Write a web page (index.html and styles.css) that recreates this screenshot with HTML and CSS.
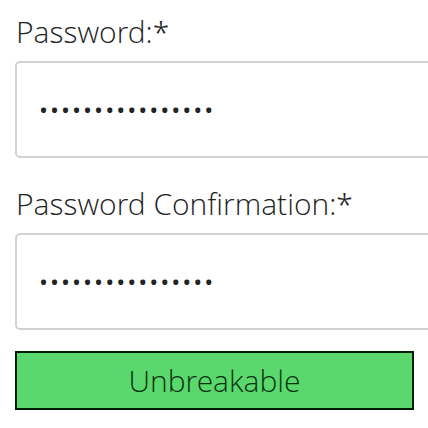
FILE: index.html
```html
<!DOCTYPE html>
<html>
<head>
<meta charset="utf-8">
<link rel="stylesheet" href="styles.css">
</head>
<body>
<form class="form">
  <div class="field">
    <label class="label" for="pw">Password:*</label>
    <input class="input" id="pw" type="password" value="aaaaaaaaaaaaaaaa">
  </div>
  <div class="field">
    <label class="label" for="pw2">Password Confirmation:*</label>
    <input class="input" id="pw2" type="password" value="aaaaaaaaaaaaaaaa">
  </div>
  <button class="button" type="button">Unbreakable</button>
</form>
</body>
</html>
```
FILE: styles.css
```css
html, body {
  margin: 0;
  padding: 0;
  background: #fff;
  overflow: hidden;
}
body {
  font-family: "Open Sans Light", "Open Sans", "Liberation Sans", sans-serif;
  font-weight: 300;
  color: #222;
}
.form {
  width: 399px;
  padding: 13px 15px 0 15px;
  display: flex;
  flex-direction: column;
}
.field {
  display: flex;
  flex-direction: column;
  margin-bottom: 27px;
}
.field + .field {
  margin-bottom: 21px;
}
.label {
  font-size: 30px;
  line-height: 38px;
  padding-left: 1px;
  margin-bottom: 10px;
}
.input {
  box-sizing: border-box;
  width: 440px;
  height: 97px;
  margin: 0;
  padding: 0 22px;
  border: 2px solid #d2d2d2;
  border-radius: 5px;
  font-family: "Open Sans", sans-serif;
  font-size: 24px;
  letter-spacing: 2px;
  color: #222;
  background: #fff;
  outline: none;
}
.button {
  box-sizing: border-box;
  width: 399px;
  height: 59px;
  margin: 0;
  padding: 0;
  border: 2px solid #011c03;
  background: #5ad86d;
  color: #0b3410;
  font-family: "Open Sans Light", "Open Sans", sans-serif;
  font-weight: 300;
  font-size: 30px;
  cursor: pointer;
}
```
